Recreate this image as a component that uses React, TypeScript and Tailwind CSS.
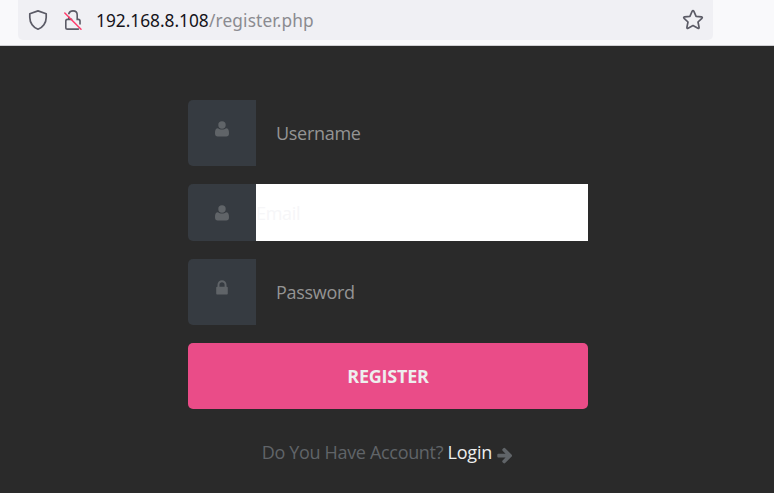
import React from 'react';

function UserIcon() {
  return (
    <svg className="h-4 w-[14px]" viewBox="0 0 14 16" fill="currentColor">
      <circle cx="7" cy="4" r="3.7" />
      <path d="M2.9 7.2C.8 7.2 0 8.9 0 12.2C0 14.6 1 15.4 2.7 15.4H11.3C13 15.4 14 14.6 14 12.2C14 8.9 13.2 7.2 11.1 7.2C10 8 8.7 8.6 7 8.6S4 8 2.9 7.2Z" />
    </svg>
  );
}

function LockIcon() {
  return (
    <svg className="size-[18px]" viewBox="0 0 1792 1792" fill="currentColor">
      <path d="M640 768h512v-192q0-106-75-181t-181-75-181 75-75 181v192zm832 96v576q0 40-28 68t-68 28h-960q-40 0-68-28t-28-68v-576q0-40 28-68t68-28h32v-192q0-184 132-316t316-132 316 132 132 316v192h32q40 0 68 28t28 68z" />
    </svg>
  );
}

function ArrowIcon() {
  return (
    <svg className="mt-1 ml-1 size-[18px]" viewBox="0 0 1792 1792" fill="currentColor">
      <path d="M1600 960q0 54-37 91l-651 651q-39 37-91 37-51 0-90-37l-75-75q-38-38-38-91t38-91l293-293h-704q-52 0-84.5-37.5t-32.5-90.5v-128q0-53 32.5-90.5t84.5-37.5h704l-293-294q-38-36-38-90t38-90l75-75q38-38 90-38 53 0 91 38l651 651q37 35 37 90z" />
    </svg>
  );
}

function AddressBar() {
  return (
    <header className="h-[46px] border-b border-[#cfcfd3] bg-[#f9f9fb] pl-[18px]">
      <div className="flex h-10 w-[695px] items-center rounded-b-[5px] bg-[#f0f0f4] pr-[9px] pl-[10px]">
        <svg className="size-5" viewBox="0 0 20 20" fill="none" stroke="#5b5b66" strokeWidth="1.7" strokeLinejoin="round">
          <path d="M10 .9L18.2 3.8V7.5C18.2 12.8 14.8 17.5 10 19.2C5.2 17.5 1.8 12.8 1.8 7.5V3.8Z" />
        </svg>
        <svg className="ml-4 h-5 w-[18px]" viewBox="0 0 18 20" fill="none" stroke="#5b5b66" strokeWidth="1.6" strokeLinecap="round">
          <path d="M4.8 3.6C5.5 1.9 7 .9 9 .9C11.5.9 13.2 2.6 13.2 5V9.4H14.3Q16 9.4 16 11.1V14" />
          <path d="M4.8 7V9.4H3.5Q1.8 9.4 1.8 11.1V17.4Q1.8 19.1 3.5 19.1H14.5M4.8 9.4H7.6" />
          <path d="M.8 3L17 19.2" stroke="#ff3b6b" strokeWidth="1.5" />
        </svg>
        <div className="ml-[14px] flex grow pt-0.5 font-['Noto_Sans',sans-serif] text-[17.3px] leading-[38px] text-[#15141a]">
          <span className="w-[113px]">192.168.8.108</span>
          <span className="tracking-[0.12px] text-[#8b8b90]">/register.php</span>
        </div>
        <svg className="size-[22px]" viewBox="0 0 22 22" fill="none" stroke="#5b5b66" strokeWidth="1.7" strokeLinejoin="round">
          <path d="M10.2 2.2Q11 .8 11.8 2.2L14.1 7.3L19.5 7.9Q20.9 8.2 19.9 9.3L16 13L17.1 18.3Q17.2 19.8 15.9 19.2L11 16.5L6.1 19.2Q4.8 19.8 4.9 18.3L6 13L2.1 9.3Q1.1 8.2 2.5 7.9L7.9 7.3Z" />
        </svg>
      </div>
    </header>
  );
}

export default function App() {
  return (
    <div className="h-[493px] overflow-hidden bg-[#2a2a2a] font-['Open_Sans',sans-serif] text-[18px] text-[#606468]">
      <AddressBar />
      <form className="mt-[54px] ml-[188px] flex w-[400px] flex-col">
        <div className="flex h-[66px]">
          <label className="flex w-[68px] justify-center rounded-l-[5px] bg-[#363b41] pt-[21px]"><UserIcon /></label>
          <input className="w-[332px] bg-transparent px-5 tracking-[-0.3px] outline-none placeholder:text-[#949494]" placeholder="Username" />
        </div>
        <div className="mt-[18px] flex h-[57px]">
          <label className="flex w-[68px] justify-center rounded-l-[5px] bg-[#363b41] pt-[21px]"><UserIcon /></label>
          <input className="w-[332px] bg-white pt-0.5 tracking-[-0.3px] outline-none placeholder:text-[#f6f6f8]" placeholder="Email" />
        </div>
        <div className="mt-[18px] flex h-[66px]">
          <label className="flex w-[68px] justify-center rounded-l-[5px] bg-[#363b41] pt-5"><LockIcon /></label>
          <input className="w-[332px] bg-transparent px-5 tracking-[-0.3px] outline-none placeholder:text-[#949494]" placeholder="Password" />
        </div>
        <button type="button" className="mt-[18px] h-[66px] rounded-[5px] bg-[#ea4c88] font-bold tracking-[-0.25px] text-[#eee]">REGISTER</button>
        <p className="mt-[30px] flex h-[27px] items-center justify-center whitespace-pre tracking-[-0.33px]">
          Do You Have Account? <a className="tracking-[-0.15px] text-[#eee]">Login</a><ArrowIcon />
        </p>
      </form>
    </div>
  );
}
